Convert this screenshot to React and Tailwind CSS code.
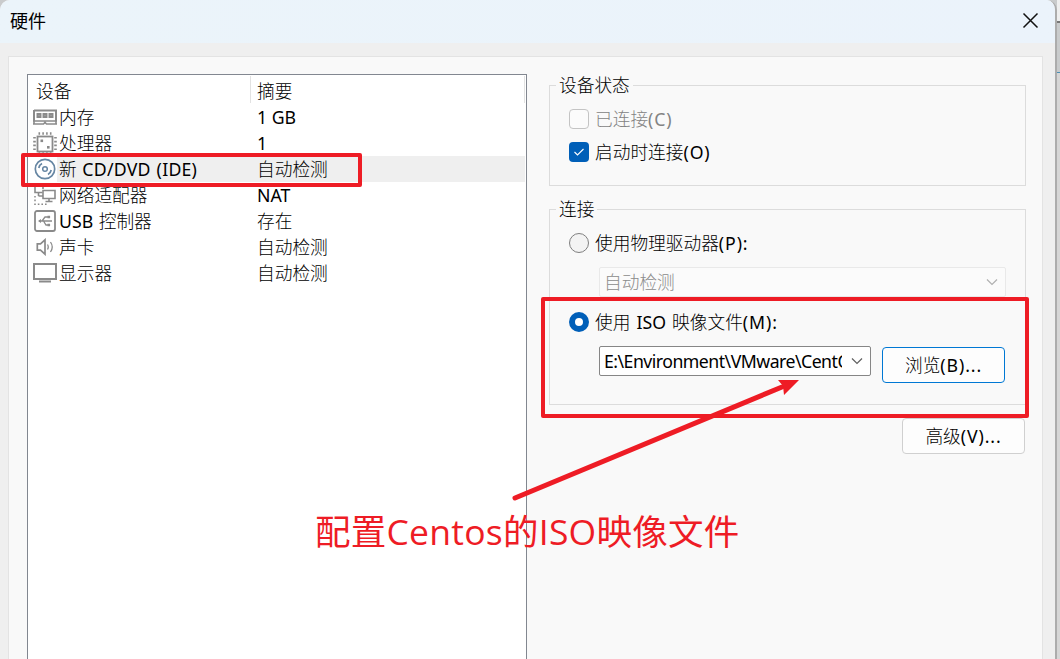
import React from "react";

const ui =
  "font-['Noto_Sans','Noto_Sans_CJK_SC_Light','Noto_Sans_CJK_SC',sans-serif] text-[17.7px] whitespace-nowrap";

function MemoryIcon() {
  return (
    <svg width="24" height="17" viewBox="0 0 24 17" fill="none" stroke="#8a8a8a">
      <path d="M1 1.5H23V12M1 1V12" strokeWidth="2" />
      <path d="M0 12H24M0 15H10.5L12 13.5L13.5 15H24M1 12V15M23 12V15" strokeWidth="1.6" />
      <path d="M4.5 5h3v3h-3zM10.5 5h3v3h-3zM16.5 5h3v3h-3z" strokeWidth="2" fill="#aaa" />
    </svg>
  );
}

function CpuIcon() {
  return (
    <svg width="24" height="23" viewBox="0 0 24 23" fill="none" stroke="#8a8a8a">
      <rect x="4.5" y="4.5" width="15" height="15" strokeWidth="1.8" />
      <path d="M5.5 1.5H19M5.5 21.5H19" strokeWidth="2.6" strokeDasharray="1.6 2.2" />
      <path d="M1.5 5V20M22.5 5V20" strokeWidth="2.6" strokeDasharray="1.6 2.2" />
      <rect x="7.5" y="7.5" width="2.6" height="2.6" fill="#8a8a8a" stroke="none" />
      <rect x="14" y="14" width="2.6" height="2.6" fill="#8a8a8a" stroke="none" />
    </svg>
  );
}

function DiscIcon() {
  return (
    <svg width="22" height="22" viewBox="0 0 22 22" fill="none" stroke="#6686a3">
      <circle cx="11" cy="11" r="9.7" strokeWidth="1.7" fill="#fff" />
      <circle cx="11" cy="11" r="2.3" strokeWidth="1.5" />
      <path d="M4.8 10A6.3 6.3 0 0 1 8 5.6M17.2 12A6.3 6.3 0 0 1 14 16.4" strokeWidth="1.7" />
    </svg>
  );
}

function NetworkIcon() {
  return (
    <svg width="22" height="20" viewBox="0 0 22 20" fill="none" stroke="#8a8a8a" strokeWidth="1.6">
      <path d="M1 0V7.5H8.5M4.5 7.5V11M4.5 11H9M9 4V1" />
      <path d="M9 5.5H21V13.5H9ZM15 13.5V16M11.5 16.5H18.5" />
      <path d="M1 11V18M0.2 19.2H14" strokeWidth="1.5" strokeDasharray="1.6 2" />
    </svg>
  );
}

function UsbIcon() {
  return (
    <svg width="22" height="22" viewBox="0 0 22 22" fill="none" stroke="#8a8a8a" strokeWidth="1.3">
      <rect x="1" y="1" width="20" height="20" rx="2" strokeWidth="1.8" />
      <path d="M5 11H18M8 11L11 7H14M9.5 11L12 15H14" />
      <path d="M7 9V13L4 11ZM13.5 5.7h2.6v2.6h-2.6zM13.5 13.7h2.6v2.6h-2.6z" fill="#8a8a8a" stroke="none" />
    </svg>
  );
}

function SoundIcon() {
  return (
    <svg width="18" height="18" viewBox="0 0 18 18" fill="none" stroke="#8a8a8a" strokeWidth="1.7">
      <path d="M1.3 5.8H4.5L9 1.8V16.2L4.5 12.2H1.3Z" />
      <path d="M11.5 6.5Q13 9 11.5 11.5M14.5 4Q18 9 14.5 14" strokeWidth="1.3" />
    </svg>
  );
}

function DisplayIcon() {
  return (
    <svg width="24" height="20" viewBox="0 0 24 20" fill="none" stroke="#8a8a8a" strokeWidth="2">
      <rect x="1" y="1" width="22" height="15" />
      <path d="M6 18.5H18" />
    </svg>
  );
}

const devices = [
  { icon: <MemoryIcon />, name: "内存", summary: "1 GB" },
  { icon: <CpuIcon />, name: "处理器", summary: "1" },
  {
    icon: <DiscIcon />,
    name: (
      <>
        新 <span className="tracking-[0.25px]">CD/DVD (IDE)</span>
      </>
    ),
    summary: "自动检测",
    selected: true,
  },
  { icon: <NetworkIcon />, name: "网络适配器", summary: "NAT" },
  { icon: <UsbIcon />, name: "USB 控制器", summary: "存在" },
  { icon: <SoundIcon />, name: "声卡", summary: "自动检测" },
  { icon: <DisplayIcon />, name: "显示器", summary: "自动检测" },
];

function DeviceList() {
  return (
    <div className="mt-[17px] ml-[18px] h-[600px] w-[500px] shrink-0 border border-[#828790] bg-white">
      <div className="flex h-[29px] pt-px leading-[30px]">
        <div className="h-[27px] w-[223px] border-r border-[#e2e2e2] pl-[8px]">设备</div>
        <div className="h-[27px] w-[274px] border-r border-[#e2e2e2] pl-[6px]">摘要</div>
      </div>
      {devices.map((d, i) => (
        <div key={i} className="flex h-[26px] leading-[26px]">
          <div className="flex w-[29px] shrink-0 items-center justify-center pl-[5px]">{d.icon}</div>
          <div className={d.selected ? "flex w-[468px] bg-[#efefef]" : "flex w-[468px]"}>
            <div className="w-[200px] shrink-0 pl-[2px] [word-spacing:1px]">{d.name}</div>
            <div>{d.summary}</div>
          </div>
        </div>
      ))}
    </div>
  );
}

function Group({ title, className, children }) {
  return (
    <fieldset className={"min-w-0 border border-[#dcdcdc] " + className}>
      <legend className="ml-[6px] h-[24px] px-[3px] leading-[25px]">{title}</legend>
      {children}
    </fieldset>
  );
}

function AccessKey({ children }) {
  return <span className="tracking-[0.9px]">{children}</span>;
}

function Chevron({ color }) {
  return (
    <svg className="shrink-0" width="12" height="8" viewBox="0 0 12 8" fill="none" stroke={color} strokeWidth="1.2">
      <path d="M1 1.5L6 6.5L11 1.5" />
    </svg>
  );
}

export default function App() {
  return (
    <div className={"relative flex h-[659px] w-[1060px] overflow-hidden bg-[#c9cbcc] text-black " + ui}>
      <div className="flex h-[661px] w-[1057px] shrink-0 flex-col overflow-hidden rounded-t-[10px] border-r-2 border-[#acacac] bg-[#efefef]">
        <div className="flex h-[43px] shrink-0 items-center justify-between bg-gradient-to-r from-[#ebf4fa] to-[#ebf3fb] pr-[16px] pl-[10px]">
          <span className="-mt-[3px] font-['Noto_Sans_CJK_SC',sans-serif] text-[18px]">硬件</span>
          <svg className="-mt-[2px]" width="17" height="17" viewBox="0 0 17 17" stroke="#111" strokeWidth="1.5">
            <path d="M1.5 1.5L15.5 15.5M15.5 1.5L1.5 15.5" />
          </svg>
        </div>
        <div className="mt-[13px] ml-[8px] flex h-[620px] w-[1035px] shrink-0 border border-[#e3e3e3] bg-[#f9f9f9]">
          <DeviceList />
          <div className="ml-[22px] flex w-[477px] flex-col pt-[16px]">
            <Group title="设备状态" className="h-[113px]">
              <div className="flex flex-col gap-[7px] pt-[9px] pl-[19px] leading-[26px]">
                <div className="flex h-[26px] items-center gap-[6px] text-[#838383]">
                  <div className="size-[20px] rounded-[4px] border border-[#c4c4c4] bg-[#fbfbfb]" />
                  <span>
                    已连接<AccessKey>(C)</AccessKey>
                  </span>
                </div>
                <div className="flex h-[26px] items-center gap-[6px]">
                  <div className="flex size-[20px] items-center justify-center rounded-[4px] bg-[#005fb8]">
                    <svg width="12" height="12" viewBox="0 0 12 12" fill="none" stroke="#fff" strokeWidth="1.1">
                      <path d="M1.5 6L4.5 9L10.5 3" />
                    </svg>
                  </div>
                  <span>
                    启动时连接<AccessKey>(O)</AccessKey>
                  </span>
                </div>
              </div>
            </Group>
            <Group title="连接" className="mt-[11px] h-[208px]">
              <div className="flex flex-col pt-[9px] pl-[19px]">
                <div className="flex h-[26px] items-center gap-[6px]">
                  <div className="size-[20px] rounded-full border border-[#7f7f7f] bg-[#f3f3f3]" />
                  <span>
                    使用物理驱动器<AccessKey>(P):</AccessKey>
                  </span>
                </div>
                <div className="mt-[11px] ml-[30px] flex h-[30px] w-[407px] items-center justify-between rounded-[2px] border border-[#e9e9e9] bg-[#fbfbfb] pr-[7px] pl-[4px] text-[#8b8b8b]">
                  <span>自动检测</span>
                  <Chevron color="#b0b0b0" />
                </div>
                <div className="mt-[12px] flex h-[26px] items-center gap-[6px]">
                  <div className="size-[20px] rounded-full border-[6px] border-[#005fb8] bg-white" />
                  <span className="[word-spacing:1.5px]">
                    使用 ISO 映像文件<AccessKey>(M):</AccessKey>
                  </span>
                </div>
                <div className="mt-[11px] ml-[30px] flex items-start">
                  <div className="flex h-[30px] w-[272px] items-center justify-between rounded-[2px] border border-[#868686] bg-white pr-[7px] pl-[4px]">
                    <span className="w-[238px] shrink-0 overflow-hidden tracking-[-0.52px]">E:\Environment\VMware\CentO</span>
                    <Chevron color="#606060" />
                  </div>
                  <div className="mt-px ml-[11px] flex h-[36px] w-[123px] items-center justify-center rounded-[4px] border border-[#0078d4] bg-[#fdfdfd]">
                    浏览<AccessKey>(B)...</AccessKey>
                  </div>
                </div>
              </div>
            </Group>
            <div className="mt-[13px] mr-px flex h-[36px] w-[123px] items-center justify-center self-end rounded-[4px] border border-[#d0d0d0] bg-[#fdfdfd]">
              高级<AccessKey>(V)...</AccessKey>
            </div>
          </div>
        </div>
      </div>
      <div className="flex h-[659px] w-[3px] shrink-0 flex-col">
        <div className="h-[21px] bg-[#eeeeee]" />
        <div className="h-[2px] bg-[#777777]" />
        <div className="h-[49px] bg-[#c9cbcc]" />
        <div className="h-px bg-[#4a90b5]" />
        <div className="grow bg-[#d6d6d6]" />
      </div>

      <div className="absolute top-[153px] left-[21px] h-[34px] w-[341px] rounded-[2px] border-4 border-[#ee1c25]" />
      <div className="absolute top-[297px] left-[541px] h-[121px] w-[488px] rounded-[2px] border-4 border-[#ee1c25]" />
      <svg className="absolute top-[370px] left-[505px]" width="305" height="140" viewBox="505 370 305 140">
        <path d="M515 498L782 387" stroke="#ee1c25" strokeWidth="5" strokeLinecap="round" />
        <path d="M799 380L778 380L783 386L784 395Z" fill="#ee1c25" />
      </svg>
      <div className="absolute top-[507px] left-[315px] font-['Open_Sans','Noto_Sans_CJK_SC',sans-serif] text-[35.5px] leading-[48px] tracking-[0.25px] text-[#ee1c25]">
        配置Centos的ISO映像文件
      </div>
    </div>
  );
}
